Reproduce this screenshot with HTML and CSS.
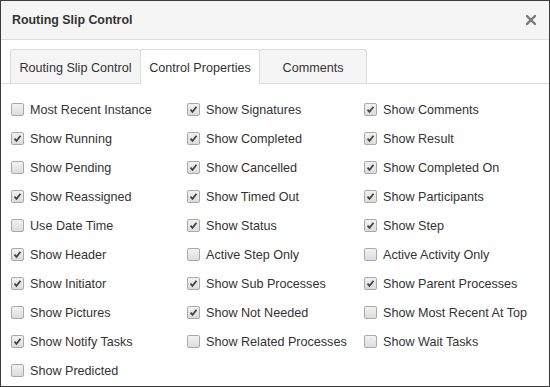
FILE: index.html
```html
<!DOCTYPE html>
<html lang="en">
  <head>
    <meta http-equiv="Content-Type" content="text/html;charset=UTF-8" />
    <title>Routing Slip Control</title>
    <link rel="stylesheet" href="styles.css">
  </head>
  <body>
    <div class="dialog">
      <header class="dialog-header">
        <h1>Routing Slip Control</h1>
        <button class="close" type="button" aria-label="Close">
          <svg width="10" height="10" viewBox="0 0 10 10">
            <path d="M1 1 L9 9 M9 1 L1 9" stroke="#7a7a7a" stroke-width="2.4" stroke-linecap="square" />
          </svg>
        </button>
      </header>

      <main class="dialog-body">
        <nav class="tabs">
          <div class="tab tab-first">Routing Slip Control</div>
          <div class="tab tab-active">Control Properties</div>
          <div class="tab tab-last">Comments</div>
        </nav>

        <section class="options">
          <label class="option"><span class="box"></span>Most Recent Instance</label>
          <label class="option"><span class="box checked"></span>Show Signatures</label>
          <label class="option"><span class="box checked"></span>Show Comments</label>

          <label class="option"><span class="box checked"></span>Show Running</label>
          <label class="option"><span class="box checked"></span>Show Completed</label>
          <label class="option"><span class="box checked"></span>Show Result</label>

          <label class="option"><span class="box"></span>Show Pending</label>
          <label class="option"><span class="box checked"></span>Show Cancelled</label>
          <label class="option"><span class="box checked"></span>Show Completed On</label>

          <label class="option"><span class="box checked"></span>Show Reassigned</label>
          <label class="option"><span class="box checked"></span>Show Timed Out</label>
          <label class="option"><span class="box checked"></span>Show Participants</label>

          <label class="option"><span class="box"></span>Use Date Time</label>
          <label class="option"><span class="box checked"></span>Show Status</label>
          <label class="option"><span class="box checked"></span>Show Step</label>

          <label class="option"><span class="box checked"></span>Show Header</label>
          <label class="option"><span class="box"></span>Active Step Only</label>
          <label class="option"><span class="box"></span>Active Activity Only</label>

          <label class="option"><span class="box checked"></span>Show Initiator</label>
          <label class="option"><span class="box checked"></span>Show Sub Processes</label>
          <label class="option"><span class="box checked"></span>Show Parent Processes</label>

          <label class="option"><span class="box"></span>Show Pictures</label>
          <label class="option"><span class="box checked"></span>Show Not Needed</label>
          <label class="option"><span class="box"></span>Show Most Recent At Top</label>

          <label class="option"><span class="box checked"></span>Show Notify Tasks</label>
          <label class="option"><span class="box"></span>Show Related Processes</label>
          <label class="option"><span class="box"></span>Show Wait Tasks</label>

          <label class="option"><span class="box"></span>Show Predicted</label>
        </section>
      </main>
    </div>
  </body>
</html>
```

FILE: styles.css
```css
html, body {
  margin: 0;
  padding: 0;
  height: 100%;
}

body {
  font-family: 'Liberation Sans', Arial, sans-serif;
  font-size: 12.6px;
  color: #333;
  background: #fff;
}

.dialog {
  box-sizing: border-box;
  height: 100%;
  border: 1px solid #3c3c3c;
  background: #fff;
}

.dialog-header {
  display: flex;
  align-items: center;
  justify-content: space-between;
  height: 38px;
  padding: 0 13px 0 11px;
  background: #f5f5f5;
  border-bottom: 1px solid #dcdcdc;
}

.dialog-header h1 {
  margin: 0;
  font-size: 12.4px;
  font-weight: bold;
  color: #333;
}

.close {
  display: flex;
  padding: 0;
  border: none;
  background: none;
  cursor: pointer;
}

/* Tabs */
.dialog-body {
  padding-top: 9px;
}

.tabs {
  display: flex;
  padding-left: 9px;
  border-bottom: 1px solid #dcdcdc;
}

.tab {
  box-sizing: border-box;
  height: 34px;
  line-height: 36px;
  padding: 0 4px;
  text-align: center;
  white-space: nowrap;
  background: #f5f5f5;
  border: 1px solid #dcdcdc;
  border-bottom: none;
  border-radius: 3px 3px 0 0;
  color: #333;
}

.tab + .tab {
  margin-left: -1px;
}

.tab-first {
  width: 131px;
}

.tab-active {
  width: 120px;
  background: #fff;
  margin-bottom: -1px;
  height: 35px;
}

.tab-last {
  width: 108px;
}

/* Options grid */
.options {
  display: grid;
  grid-template-columns: 176px 177px 1fr;
  grid-auto-rows: 29px;
  padding: 11px 0 0 10px;
}

.option {
  display: flex;
  align-items: center;
  gap: 6px;
  white-space: nowrap;
}

.box {
  box-sizing: border-box;
  width: 13px;
  height: 13px;
  border: 1px solid #a9a9a9;
  border-radius: 2px;
  background: linear-gradient(#f2f2f2, #dcdcdc);
  flex: none;
}

.box.checked {
  background-image: url("data:image/svg+xml,%3Csvg xmlns='http://www.w3.org/2000/svg' width='11' height='11' viewBox='0 0 11 11'%3E%3Cpath d='M2.5 5.6 L4.5 7.8 L8.5 2.8' fill='none' stroke='%23444' stroke-width='1.8'/%3E%3C/svg%3E"), linear-gradient(#f2f2f2, #dcdcdc);
  background-repeat: no-repeat;
  background-position: center;
}
```
